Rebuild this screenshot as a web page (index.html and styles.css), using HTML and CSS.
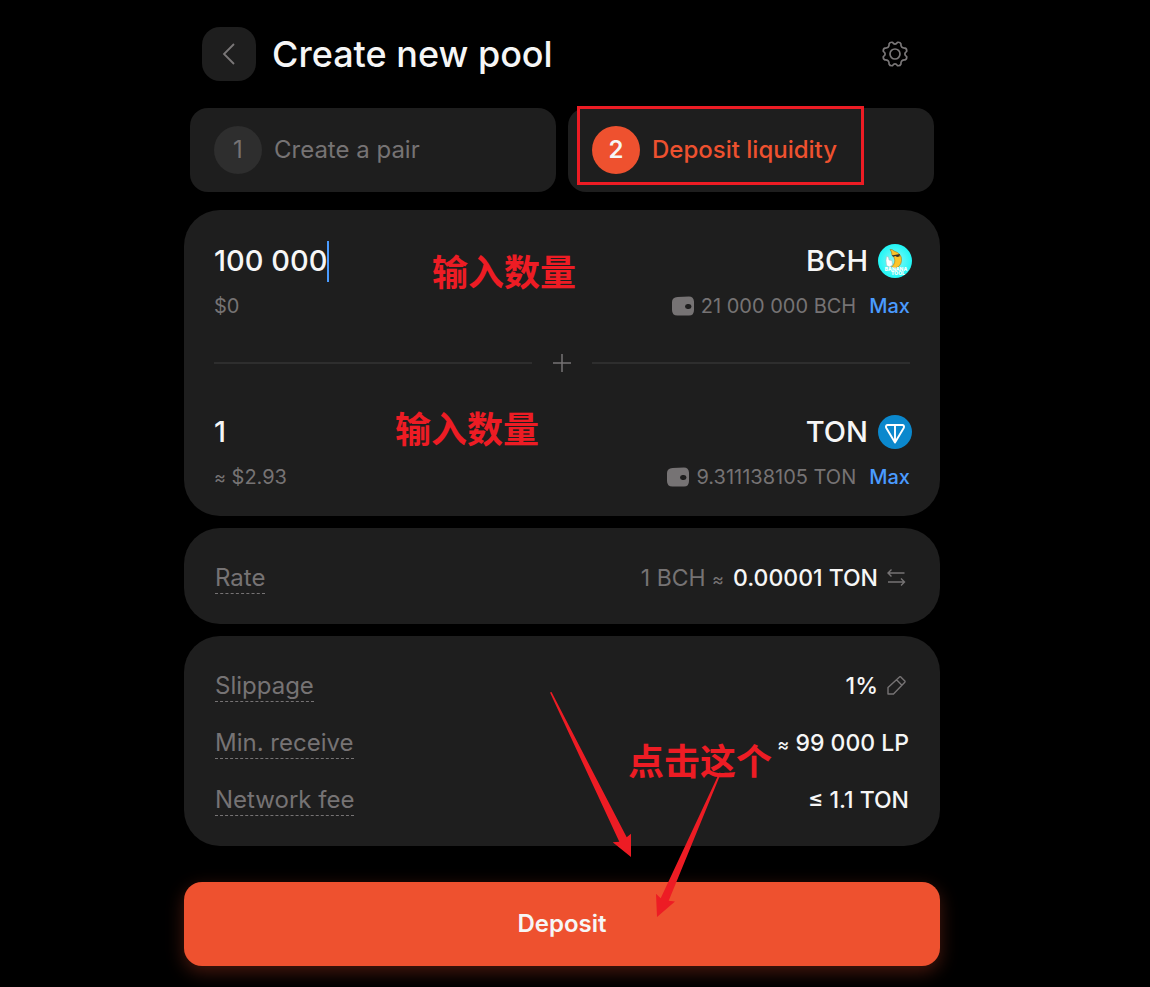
FILE: index.html
```html
<!DOCTYPE html>
<html lang="en">
<head>
<meta charset="utf-8">
<meta name="viewport" content="width=device-width, initial-scale=1">
<title>Create new pool</title>
<link rel="stylesheet" href="styles.css">
</head>
<body>
<main class="pool">
  <header class="pool-header">
    <button class="back" type="button" aria-label="Back">
      <svg width="24" height="24" viewBox="0 0 24 24" fill="none" stroke="currentColor" stroke-width="1.800"><path d="M17 2 7 12l10 10"/></svg>
    </button>
    <h1 class="title">Create new pool</h1>
    <button class="settings" type="button" aria-label="Settings">
      <svg width="30" height="30" viewBox="0 0 30 30" fill="none" stroke="currentColor" stroke-width="1.700" stroke-linejoin="round"><circle cx="15" cy="15" r="5"/><path d="M12.400 3.300Q15 7 17.600 3.300Q20.200 3 20.900 4.900Q20.600 9.400 25.100 9.100Q27 9.800 26.700 12.400Q23 15 26.700 17.600Q27 20.200 25.100 20.900Q20.600 20.600 20.900 25.100Q20.200 27 17.600 26.700Q15 23 12.400 26.700Q9.800 27 9.100 25.100Q9.400 20.600 4.900 20.900Q3 20.200 3.300 17.600Q7 15 3.300 12.400Q3 9.800 4.900 9.100Q9.400 9.400 9.100 4.900Q9.800 3 12.400 3.300Z"/></svg>
    </button>
  </header>

  <ol class="steps">
    <li class="step"><span class="step-number">1</span><span>Create a pair</span></li>
    <li class="step step-active" aria-current="step"><span class="step-number">2</span><span>Deposit liquidity</span><span class="highlight"></span></li>
  </ol>

  <form class="form">
    <section class="card deposit">
      <div class="asset">
        <div class="row amount-row">
          <div class="amount">
            <input class="amount-input" type="text" inputmode="decimal" value="100 000" size="6" aria-label="BCH amount"><span class="caret"></span>
          </div>
          <div class="token"><span>BCH</span>
            <svg width="34" height="34" viewBox="0 0 34 34" aria-hidden="true">
              <defs><radialGradient id="aqua"><stop offset="0" stop-color="#8ff8f5"/><stop offset="1" stop-color="#1ff6f6"/></radialGradient></defs>
              <circle cx="17" cy="17" r="17" fill="url(#aqua)"/>
              <path d="M12 5.500q2.500-.5 4 1.500 8 2.500 7.500 9.500-.5 6-6 7.500l-4-1q5-4.500 2.500-9.500-3-3-2.500-5.500z" fill="#fcc428" stroke="#9a7420" stroke-width=".6"/>
              <path d="M13.500 11.500 22 10l-.5 2.500-2.500.6-1.500-1.200-2 .8z" fill="#37312b"/>
              <path d="M8.500 12.500l2 .5.5 3 3 .5.5 4.500-3 2-3-1.500-.5-5z" fill="#fff" stroke="#a0b5b5" stroke-width=".5"/>
              <g class="logo-text"><text x="18" y="26.500">BANANA</text><text x="20" y="31">TOOL</text></g>
            </svg>
          </div>
        </div>
        <div class="row detail-row">
          <span>$0</span>
          <div class="balance">
            <svg width="22" height="20" viewBox="0 0 22 20" aria-hidden="true"><path fill="currentColor" fill-rule="evenodd" d="M5.500 1 17 .500q4.500 0 5 5V14q0 5.500-5 5.500H5.500Q0 19.500 0 14V6q0-4.500 5.500-5zM15.500 8q-2.500.3-2.500 2.500t2.500 2.500h1.500q2.500-.3 2.500-2.500T17 8z"/></svg>
            <span>21 000 000 BCH</span><button class="max" type="button">Max</button>
          </div>
        </div>
      </div>

      <div class="divider"><svg width="18" height="18" viewBox="0 0 18 18" stroke="currentColor" stroke-width="1.500" aria-hidden="true"><path d="M9 0v18M0 9h18"/></svg></div>

      <div class="asset">
        <div class="row amount-row">
          <div class="amount">
            <input class="amount-input" type="text" inputmode="decimal" value="1" size="6" aria-label="TON amount">
          </div>
          <div class="token"><span>TON</span>
            <svg width="34" height="34" viewBox="0 0 34 34" aria-hidden="true"><circle cx="17" cy="17" r="17" fill="#0b88cd"/><path d="M9.500 10h15q2.300.6 1.200 3L17 27.500 8.300 13q-1.100-2.400 1.200-3zM17 10v17" fill="none" stroke="#fff" stroke-width="1.900" stroke-linejoin="round"/></svg>
          </div>
        </div>
        <div class="row detail-row">
          <span><span class="sign">≈</span> $2.93</span>
          <div class="balance">
            <svg width="22" height="20" viewBox="0 0 22 20" aria-hidden="true"><path fill="currentColor" fill-rule="evenodd" d="M5.500 1 17 .500q4.500 0 5 5V14q0 5.500-5 5.500H5.500Q0 19.500 0 14V6q0-4.500 5.500-5zM15.500 8q-2.500.3-2.500 2.500t2.500 2.500h1.500q2.500-.3 2.500-2.500T17 8z"/></svg>
            <span>9.311138105 TON</span><button class="max" type="button">Max</button>
          </div>
        </div>
      </div>
    </section>

    <section class="card info">
      <div class="row">
        <span class="label">Rate</span>
        <div class="value"><span class="muted">1 BCH <span class="sign">≈</span></span><span>0.00001 TON</span>
          <button class="icon-button" type="button" aria-label="Swap rate"><svg width="20" height="20" viewBox="0 0 20 20" fill="none" stroke="currentColor" stroke-width="1.400"><path d="M17.500 5H1M4.500 1.500 1 5l3.500 3.500M1 14h16.500M14 10.500l3.500 3.500-3.500 3.500"/></svg></button>
        </div>
      </div>
    </section>

    <section class="card info">
      <div class="row">
        <span class="label">Slippage</span>
        <div class="value"><span>1%</span>
          <button class="icon-button" type="button" aria-label="Edit slippage"><svg width="20" height="20" viewBox="0 0 20 20" fill="none" stroke="currentColor" stroke-width="1.400" stroke-linejoin="round"><path d="M1 11.500 12.500.900q.7-.5 1.300 0l4 4q.5.7 0 1.300L6.500 18H1zM9.500 3.800l5.200 5.200"/></svg></button>
        </div>
      </div>
      <div class="row"><span class="label">Min. receive</span><div class="value"><span><span class="sign">≈</span> 99 000 LP</span></div></div>
      <div class="row"><span class="label">Network fee</span><div class="value"><span>≤ 1.1 TON</span></div></div>
    </section>

    <button class="submit" type="button">Deposit</button>
  </form>

  <div class="notes" lang="zh-CN">
    <span class="note note-first">输入数量</span>
    <span class="note note-second">输入数量</span>
    <span class="note note-third">点击这个</span>
    <svg class="arrows" width="176" height="226" viewBox="550 692 176 226" fill="#ed1c24" aria-hidden="true">
      <path d="M550 692.500l1.500-.5L626.700 837.300 631 833.700V857L612.700 842.300 619.300 841.700z"/>
      <path d="M719.500 772.500l1.500.5L668.700 900.700 675 901.500 657 917 656 893.700 660.700 898.300z"/>
    </svg>
  </div>
</main>
</body>
</html>
```
FILE: styles.css
```css
* {
  box-sizing: border-box;
}

body {
  margin: 0;
  padding: 0 26px 20px 0;
  background: #000;
  color: #f6f6f6;
  font-family: Inter, "Noto Sans CJK SC", sans-serif;
  font-size: 24px;
  line-height: 30px;
}

button,
input {
  margin: 0;
  padding: 0;
  border: 0;
  background: none;
  color: inherit;
  font: inherit;
}

button {
  cursor: pointer;
}

svg {
  display: block;
  flex: none;
}

.pool {
  position: relative;
  max-width: 756px;
  margin: 0 auto;
}

.pool-header {
  display: flex;
  align-items: center;
  gap: 16px;
  padding: 27px 30px 27px 18px;
}

.back {
  display: grid;
  place-items: center;
  width: 54px;
  height: 54px;
  border-radius: 18px;
  background: #1e1e1e;
  color: #7a7778;
}

.title {
  margin: 0;
  font-size: 36px;
  font-weight: 500;
  line-height: 54px;
}

.settings {
  margin-left: auto;
  color: #7a7778;
}

.steps {
  display: grid;
  grid-template-columns: 1fr 1fr;
  gap: 12px;
  margin: 0 0 18px;
  padding: 0 6px;
  list-style: none;
}

.step {
  position: relative;
  display: flex;
  align-items: center;
  gap: 12px;
  padding: 18px 24px;
  border-radius: 18px;
  background: #1e1e1e;
  color: #767374;
}

.step-number {
  display: grid;
  place-items: center;
  width: 48px;
  height: 48px;
  border-radius: 50%;
  background: #2e2e2e;
}

.step-active {
  color: #ee512f;
  font-weight: 500;
}

.step-active .step-number {
  background: #ee512f;
  color: #f6f6f6;
  font-weight: 600;
}

.highlight {
  position: absolute;
  top: -2px;
  left: 9px;
  width: 287px;
  height: 79px;
  border: 3px solid #ed1c24;
}

.form {
  display: flex;
  flex-direction: column;
  gap: 12px;
}

.card {
  border-radius: 36px;
  background: #1e1e1e;
}

.deposit {
  padding: 30px 30px 24px;
}

.row {
  display: flex;
  align-items: center;
  justify-content: space-between;
}

.asset {
  display: flex;
  flex-direction: column;
  gap: 9px;
}

.amount-row {
  margin-right: -2px;
  font-size: 29px;
  font-weight: 500;
  line-height: 42px;
}

.amount {
  display: flex;
  align-items: center;
}

.amount-input {
  height: 42px;
  outline: none;
  field-sizing: content;
}

.caret {
  width: 2px;
  height: 41px;
  background: #4a9bff;
}

.token {
  display: flex;
  align-items: center;
  gap: 10px;
}

.logo-text {
  fill: #fff;
  font-size: 5px;
  font-weight: 800;
  text-anchor: middle;
}

.detail-row {
  color: #767374;
  font-size: 20px;
}

.balance {
  display: flex;
  align-items: center;
  gap: 7px;
}

.max {
  margin-left: 6px;
  color: #4a9bff;
  font-weight: 500;
}

.divider {
  display: flex;
  align-items: center;
  gap: 21px;
  height: 24px;
  margin: 30px 0 36px;
  color: #767374;
}

.divider::before,
.divider::after {
  flex: 1;
  height: 2px;
  background: #2e2e2e;
  content: "";
}

.info {
  display: flex;
  flex-direction: column;
  gap: 25px;
  padding: 34px 31px 30px;
}

.label {
  border-bottom: 1px dashed #767374;
  color: #767374;
  line-height: 31px;
}

.value {
  display: flex;
  align-items: center;
  gap: 9px;
  font-size: 23px;
  font-weight: 500;
}

.muted {
  color: #767374;
  font-weight: 400;
}

.sign {
  font-size: 18px;
  line-height: 1;
}

.icon-button {
  margin-right: 2px;
  color: #767374;
}

.submit {
  height: 84px;
  margin-top: 24px;
  border-radius: 18px;
  background: #ee512f;
  box-shadow: 0 6px 18px rgba(238, 81, 47, 0.3);
  font-weight: 600;
}

.notes {
  position: absolute;
  inset: 0;
  color: #ed1c24;
  font-family: "Noto Sans CJK SC", sans-serif;
  font-size: 36px;
  font-weight: 700;
  line-height: 48px;
  pointer-events: none;
}

.note,
.arrows {
  position: absolute;
}

.note-first {
  top: 246px;
  left: 248px;
}

.note-second {
  top: 403px;
  left: 211px;
}

.note-third {
  top: 735px;
  left: 444px;
}

.arrows {
  top: 692px;
  left: 366px;
}
```
